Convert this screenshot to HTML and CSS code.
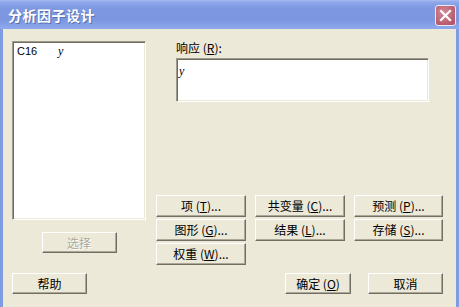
FILE: index.html
```html
<!DOCTYPE html>
<html lang="zh-CN">

<head>
    <meta charset="UTF-8">
    <title>分析因子设计</title>
    <link rel="stylesheet" href="styles.css">
</head>

<body>

    <div class="window">
        <div class="titlebar">
            <span class="title">分析因子设计</span>
            <span class="close-btn">
                <svg width="13" height="13" viewBox="0 0 13 13">
                    <path d="M2 2 L11 11 M11 2 L2 11" stroke="#fff" stroke-width="2.2" stroke-linecap="square" />
                </svg>
            </span>
        </div>

        <div class="body">
            <div class="main">
                <div class="left-col">
                    <div class="listbox">
                        <div class="list-row"><span class="col-id">C16</span><span class="col-name">y</span></div>
                    </div>
                    <button class="btn btn-select" disabled>选择</button>
                </div>

                <div class="right-col">
                    <div class="response">
                        <div class="field-label">响应 (<u>R</u>):</div>
                        <div class="textbox"><span class="var">y</span></div>
                    </div>

                    <div class="option-grid">
                        <button class="btn">项 (<u>T</u>)...</button>
                        <button class="btn">共变量 (<u>C</u>)...</button>
                        <button class="btn">预测 (<u>P</u>)...</button>
                        <button class="btn">图形 (<u>G</u>)...</button>
                        <button class="btn">结果 (<u>L</u>)...</button>
                        <button class="btn">存储 (<u>S</u>)...</button>
                        <button class="btn">权重 (<u>W</u>)...</button>
                    </div>
                </div>
            </div>

            <div class="footer">
                <button class="btn btn-help">帮助</button>
                <div class="footer-right">
                    <button class="btn btn-ok">确定 (<u>O</u>)</button>
                    <button class="btn btn-cancel">取消</button>
                </div>
            </div>
        </div>
    </div>

</body>

</html>
```

FILE: styles.css
```css
body {
    margin: 0;
    font-family: "Noto Sans CJK SC", "Liberation Sans", sans-serif;
    font-size: 12px;
    background-color: #ece9d8;
}

.window {
    width: 459px;
    height: 307px;
    display: flex;
    flex-direction: column;
    background-color: #7f9be2;
}

.titlebar {
    height: 29px;
    display: flex;
    align-items: center;
    justify-content: space-between;
    padding: 0 3px 0 8px;
    background: linear-gradient(to bottom, #a9bcef 0px, #8ea8ea 2px, #7e99e1 8px, #7c97e0 20px, #8aa5ea 27px, #8fa9eb 29px);
    box-sizing: border-box;
}

.title {
    color: #fff;
    font-weight: bold;
    font-size: 14px;
    letter-spacing: 0.5px;
    text-shadow: 1px 1px 0 #5a6fb0;
}

.close-btn {
    width: 21px;
    height: 21px;
    box-sizing: border-box;
    border: 1px solid #e8ecf8;
    border-radius: 3px;
    background: radial-gradient(circle at 40% 35%, #d48995, #b5566a 80%);
    display: flex;
    align-items: center;
    justify-content: center;
    margin-top: 1px;
}

.body {
    flex: 1;
    margin: 0 3px;
    background-color: #ece9d8;
    display: flex;
    flex-direction: column;
}

.main {
    display: flex;
    padding: 12px 0 0 9px;
}

.left-col {
    width: 134px;
    display: flex;
    flex-direction: column;
    align-items: center;
}

.listbox {
    width: 134px;
    height: 179px;
    box-sizing: border-box;
    background: #fff;
    border: 1px solid;
    border-color: #9d9a8c #fff #fff #9d9a8c;
    box-shadow: inset 1px 1px 0 #6f6d62, inset -1px -1px 0 #ece9d8;
    padding: 3px 4px;
}

.list-row {
    display: flex;
    font-family: "Liberation Sans", sans-serif;
    font-size: 11px;
    line-height: 13px;
}

.col-id {
    width: 41px;
}

.col-name {
    font-family: "Liberation Serif", serif;
    font-style: italic;
    font-size: 12px;
}

.btn {
    font-family: "Noto Sans CJK SC", sans-serif;
    font-size: 12px;
    line-height: 14px;
    color: #000;
    background-color: #ece9d8;
    border: 1px solid;
    border-color: #fff #716f64 #716f64 #fff;
    box-shadow: inset -1px -1px 0 #aca899;
    padding: 0;
    height: 22px;
    box-sizing: border-box;
}

.btn u {
    text-decoration-thickness: 1px;
    text-underline-offset: 1px;
}

.btn-select {
    width: 75px;
    height: 21px;
    margin-top: 12px;
    color: #aca899;
    text-shadow: 1px 1px 0 #fff;
}

.right-col {
    margin-left: 10px;
    display: flex;
    flex-direction: column;
}

.response {
    padding-left: 20px;
}

.field-label {
    line-height: 14px;
}

.textbox {
    width: 253px;
    height: 44px;
    box-sizing: border-box;
    margin-top: 3px;
    background: #fff;
    border: 1px solid;
    border-color: #9d9a8c #fff #fff #9d9a8c;
    box-shadow: inset 1px 1px 0 #6f6d62, inset -1px -1px 0 #ece9d8;
    padding: 2px 2px;
}

.var {
    font-family: "Liberation Serif", serif;
    font-style: italic;
    font-size: 12px;
    line-height: 12px;
}

.option-grid {
    display: grid;
    grid-template-columns: 90px 90px 89px;
    grid-auto-rows: 22px;
    column-gap: 9px;
    row-gap: 2px;
    margin-top: 93px;
}

.footer {
    display: flex;
    justify-content: space-between;
    padding: 0 13px 0 9px;
    margin-top: 8px;
}

.btn-help {
    width: 75px;
    height: 21px;
}

.footer-right {
    display: flex;
    gap: 17px;
}

.btn-ok {
    width: 66px;
    height: 21px;
}

.btn-cancel {
    width: 75px;
    height: 21px;
}
```
